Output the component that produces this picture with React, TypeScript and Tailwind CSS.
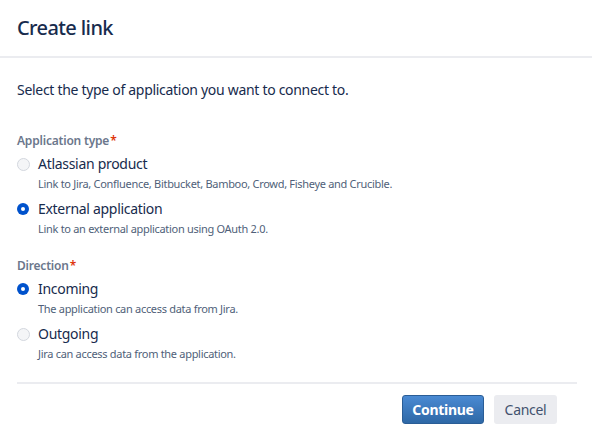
import React, { useState } from "react";

type Option = {
  value: string;
  label: string;
  description: string;
};

const appTypes: Option[] = [
  {
    value: "atlassian",
    label: "Atlassian product",
    description:
      "Link to Jira, Confluence, Bitbucket, Bamboo, Crowd, Fisheye and Crucible.",
  },
  {
    value: "external",
    label: "External application",
    description: "Link to an external application using OAuth 2.0.",
  },
];

const directions: Option[] = [
  {
    value: "incoming",
    label: "Incoming",
    description: "The application can access data from Jira.",
  },
  {
    value: "outgoing",
    label: "Outgoing",
    description: "Jira can access data from the application.",
  },
];

const RadioGroup: React.FC<{
  options: Option[];
  selected: string;
  onChange: (v: string) => void;
}> = ({ options, selected, onChange }) => (
  <div className="flex flex-col">
    {options.map((opt, idx) => {
      const checked = opt.value === selected;
      return (
        <div
          key={opt.value}
          className={idx === 0 ? "mt-[5px]" : "mt-[7px]"}
          onClick={() => onChange(opt.value)}
        >
          <div className="flex items-center h-[20px] cursor-pointer">
            <span className="w-[21px] shrink-0 flex items-center">
              {checked ? (
                <span className="block shrink-0 w-[12px] h-[12px] rounded-full bg-[#0052cc] flex items-center justify-center">
                  <span className="block w-[4px] h-[4px] rounded-full bg-white" />
                </span>
              ) : (
                <span className="block shrink-0 w-[13px] h-[13px] rounded-full bg-[#f4f5f7] border-[1.5px] border-[#d3d7de]" />
              )}
            </span>
            <span className="text-[14px] leading-[20px] tracking-[-0.3px] text-[#172b4d]">
              {opt.label}
            </span>
          </div>
          <div className="pl-[21px] mt-[2px] text-[11px] leading-[16px] tracking-[-0.3px] text-[#505f79]">
            {opt.description}
          </div>
        </div>
      );
    })}
  </div>
);

const FieldLabel: React.FC<{ children: React.ReactNode }> = ({ children }) => (
  <div className="text-[12px] leading-[16px] font-semibold tracking-[-0.2px] text-[#6b778c]">
    {children}
    <span className="text-[#de350b] ml-[1px]">*</span>
  </div>
);

export default function App() {
  const [appType, setAppType] = useState("external");
  const [direction, setDirection] = useState("incoming");

  return (
    <div className="w-[592px] h-[444px] bg-white overflow-hidden font-['Noto_Sans','Open_Sans',sans-serif]">
      {/* Header */}
      <div className="h-[58px] border-b-2 border-[#ebecf0] px-[17px] flex items-center">
        <h1 className="text-[20px] leading-[24px] font-medium tracking-[-0.6px] text-[#172b4d]">
          Create link
        </h1>
      </div>

      {/* Body */}
      <div className="px-[17px]">
        <p className="mt-[22px] text-[14px] leading-[20px] tracking-[-0.3px] text-[#172b4d]">
          Select the type of application you want to connect to.
        </p>

        <div className="mt-[33px]">
          <FieldLabel>Application type</FieldLabel>
          <RadioGroup options={appTypes} selected={appType} onChange={setAppType} />
        </div>

        <div className="mt-[21px]">
          <FieldLabel>Direction</FieldLabel>
          <RadioGroup
            options={directions}
            selected={direction}
            onChange={setDirection}
          />
        </div>

        {/* Footer */}
        <div className="mt-[20px] mr-[-2px] border-t-2 border-[#ebecf0] pt-[11px] flex justify-end gap-[10px] pr-[20px]">
          <button className="h-[29px] w-[82px] rounded-[3px] border border-[#2a5d96] bg-gradient-to-b from-[#4a8ad3] to-[#2e68a6] text-white text-[14px] font-bold tracking-[-0.3px]">
            Continue
          </button>
          <button className="h-[29px] w-[63px] rounded-[3px] bg-[#ebecf0] text-[#42526e] text-[14px] tracking-[-0.3px]">
            Cancel
          </button>
        </div>
      </div>
    </div>
  );
}
